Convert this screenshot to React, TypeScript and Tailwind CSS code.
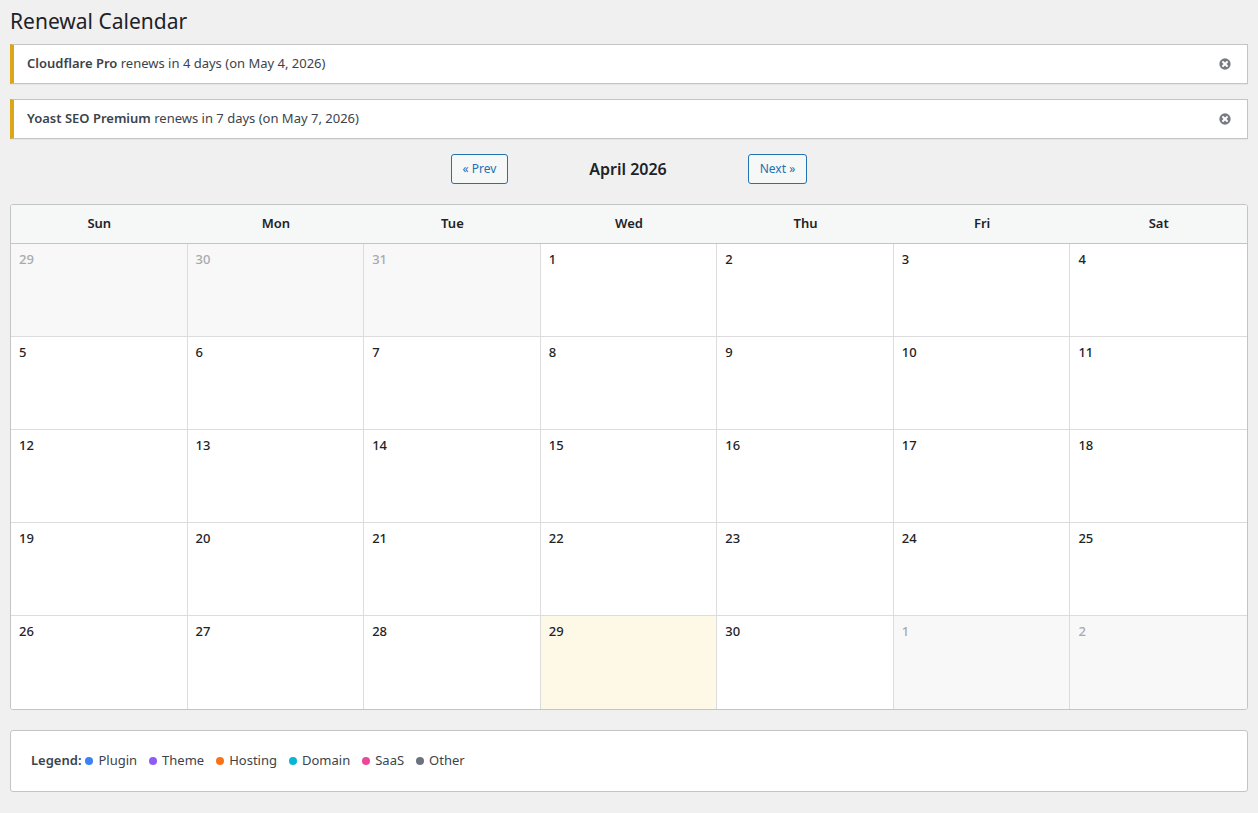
import { CircleX } from "lucide-react";

const days = ["Sun", "Mon", "Tue", "Wed", "Thu", "Fri", "Sat"];

type Cell = { n: number; muted?: boolean; today?: boolean };

const cells: Cell[] = [
  { n: 29, muted: true },
  { n: 30, muted: true },
  { n: 31, muted: true },
  ...Array.from({ length: 30 }, (_, i) => ({ n: i + 1, today: i + 1 === 29 })),
  { n: 1, muted: true },
  { n: 2, muted: true },
];

const legend = [
  { label: "Plugin", color: "bg-[#3b82f6]" },
  { label: "Theme", color: "bg-[#8b5cf6]" },
  { label: "Hosting", color: "bg-[#f97316]" },
  { label: "Domain", color: "bg-[#06b6d4]" },
  { label: "SaaS", color: "bg-[#ec4899]" },
  { label: "Other", color: "bg-[#6b7280]" },
];

function Notice({ name, text }: { name: string; text: string }) {
  return (
    <div className="flex h-[40px] items-center justify-between border border-[#c3c4c7] border-l-4 border-l-[#dba617] bg-white pl-[13px] pr-[14px] shadow-[0_1px_1px_rgba(0,0,0,0.04)]">
      <p className="text-[13px] text-[#3c434a]">
        <strong className="font-semibold">{name}</strong> {text}
      </p>
      <CircleX size={16} className="fill-[#787c82] text-white" strokeWidth={3} />
    </div>
  );
}

export default function App() {
  return (
    <div
      className="min-h-[813px] bg-[#f0f0f1] px-[10px] pb-5 text-[#1d2327]"
      style={{ fontFamily: '"Noto Sans", "Open Sans", sans-serif' }}
    >
      <h1 className="pt-[6px] text-[21px] leading-[30px] font-normal">Renewal Calendar</h1>

      <div className="mt-[8px] flex flex-col gap-[15px]">
        <Notice name="Cloudflare Pro" text="renews in 4 days (on May 4, 2026)" />
        <Notice name="Yoast SEO Premium" text="renews in 7 days (on May 7, 2026)" />
      </div>

      <div className="mt-[15px] flex items-center justify-center gap-10">
        <button className="h-[30px] w-[57px] rounded-[3px] border border-[#2271b1] bg-[#f6f7f7] text-[12px] text-[#2271b1]">
          « Prev
        </button>
        <h2 className="w-[160px] text-center text-[16px] font-semibold">April 2026</h2>
        <button className="h-[30px] w-[59px] rounded-[3px] border border-[#2271b1] bg-[#f6f7f7] text-[12px] text-[#2271b1]">
          Next »
        </button>
      </div>

      <div className="mt-[20px] overflow-hidden rounded-[3px] border border-[#c3c4c7] bg-white">
        <div className="grid grid-cols-7 border-b border-[#c3c4c7] bg-[#f6f7f7]">
          {days.map((d) => (
            <div key={d} className="flex h-[38px] items-center justify-center text-[13px] font-semibold">
              {d}
            </div>
          ))}
        </div>
        <div className="grid grid-cols-7">
          {cells.map((c, i) => (
            <div
              key={i}
              className={`h-[93px] border-[#dcdcde] px-[8px] pt-[6px] text-[13px] font-medium ${
                i % 7 !== 6 ? "border-r" : ""
              } ${i < 28 ? "border-b" : ""} ${
                c.today ? "bg-[#fef8e7]" : c.muted ? "bg-[#f8f8f8] text-[#a7aaad]" : "bg-white"
              }`}
            >
              {c.n}
            </div>
          ))}
        </div>
      </div>

      <div className="mt-[20px] flex h-[62px] items-center rounded-[3px] border border-[#c3c4c7] bg-white px-[20px] text-[13px] text-[#3c434a]">
        <strong className="mr-1 font-semibold">Legend:</strong>
        {legend.map((l) => (
          <span key={l.label} className="mr-[12px] flex items-center gap-[5px]">
            <span className={`h-2 w-2 rounded-full ${l.color}`} />
            {l.label}
          </span>
        ))}
      </div>
    </div>
  );
}
